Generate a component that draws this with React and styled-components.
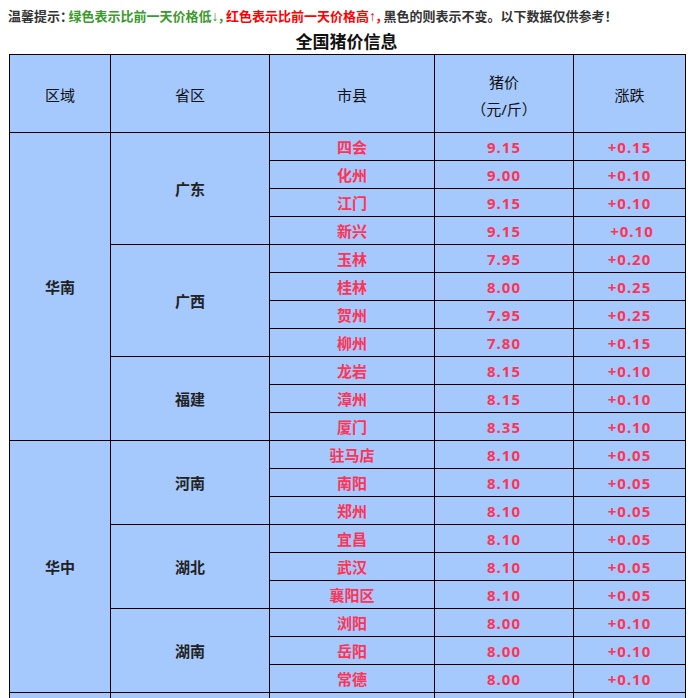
import React from 'react';
import styled, { createGlobalStyle } from 'styled-components';

const GlobalStyle = createGlobalStyle`
  html, body {
    overflow: hidden;
  }
  body {
    margin: 8px;
    background: #fff;
    font-family: "Noto Sans", "Noto Sans CJK SC", sans-serif;
    color: #222;
  }
`;

const Tip = styled.p`
  margin: 0;
  font-size: 13px;
  line-height: 17px;
  font-weight: bold;
  color: #333;
  white-space: nowrap;
`;

const TipPart = styled.span`
  color: ${props => props.color || '#333'};
`;

// half-width punctuation, like the narrow colon and commas in the notice
const Punct = styled.span`
  font-feature-settings: "halt";
  margin-right: ${props => (props.$gap ? '2px' : '0')};
`;

const Arrow = styled.span`
  display: inline-block;
  width: 6px;
  text-align: center;
  font-family: "Liberation Sans", "DejaVu Sans", sans-serif;
  font-weight: normal;
  font-size: 14px;
`;

const Title = styled.h2`
  margin: 5px 0 0;
  font-size: 17px;
  line-height: 24px;
  font-weight: bold;
  color: #111;
  text-align: center;
  width: 677px;
`;

const Table = styled.table`
  width: 677px;
  margin-left: 1px;
  border-collapse: collapse;
  table-layout: fixed;
  background: #a5c8fd;
  font-size: 15px;
`;

const HeadCell = styled.th`
  border: 1px solid #000;
  height: 78px;
  padding: 4px 0 0;
  font-weight: normal;
  line-height: 27px;
  color: #111;
  text-align: center;
  box-sizing: border-box;
`;

const Cell = styled.td`
  border: 1px solid #000;
  height: 28px;
  padding: 1px 0 0;
  text-align: center;
  box-sizing: border-box;
  line-height: 26px;
  font-weight: bold;
  color: ${props => (props.$red ? '#ff3355' : '#222')};
  letter-spacing: ${props => (props.$num ? '1px' : '0')};
`;

const data = [
  {
    region: '华南',
    provinces: [
      {
        name: '广东',
        cities: [
          ['四会', '9.15', '+0.15'],
          ['化州', '9.00', '+0.10'],
          ['江门', '9.15', '+0.10'],
          ['新兴', '9.15', '\u00a0+0.10'],
        ],
      },
      {
        name: '广西',
        cities: [
          ['玉林', '7.95', '+0.20'],
          ['桂林', '8.00', '+0.25'],
          ['贺州', '7.95', '+0.25'],
          ['柳州', '7.80', '+0.15'],
        ],
      },
      {
        name: '福建',
        cities: [
          ['龙岩', '8.15', '+0.10'],
          ['漳州', '8.15', '+0.10'],
          ['厦门', '8.35', '+0.10'],
        ],
      },
    ],
  },
  {
    region: '华中',
    provinces: [
      {
        name: '河南',
        cities: [
          ['驻马店', '8.10', '+0.05'],
          ['南阳', '8.10', '+0.05'],
          ['郑州', '8.10', '+0.05'],
        ],
      },
      {
        name: '湖北',
        cities: [
          ['宜昌', '8.10', '+0.05'],
          ['武汉', '8.10', '+0.05'],
          ['襄阳区', '8.10', '+0.05'],
        ],
      },
      {
        name: '湖南',
        cities: [
          ['浏阳', '8.00', '+0.10'],
          ['岳阳', '8.00', '+0.10'],
          ['常德', '8.00', '+0.10'],
        ],
      },
    ],
  },
  {
    region: '华东',
    provinces: [
      {
        name: '山东',
        cities: [['济南', '8.20', '+0.10']],
      },
    ],
  },
];

const renderRows = () => {
  const rows = [];
  data.forEach(area => {
    const areaSpan = area.provinces.reduce((n, p) => n + p.cities.length, 0);
    area.provinces.forEach((prov, pi) => {
      prov.cities.forEach((city, ci) => {
        rows.push(
          <tr key={`${area.region}-${prov.name}-${city[0]}`}>
            {pi === 0 && ci === 0 && <Cell rowSpan={areaSpan}>{area.region}</Cell>}
            {ci === 0 && <Cell rowSpan={prov.cities.length}>{prov.name}</Cell>}
            <Cell $red>{city[0]}</Cell>
            <Cell $red $num>{city[1]}</Cell>
            <Cell $red $num>{city[2]}</Cell>
          </tr>
        );
      });
    });
  });
  return rows;
};

const App = () => (
  <>
    <GlobalStyle />
    <Tip>
      温馨提示<Punct $gap>：</Punct>
      <TipPart color="#3a9a2c">
        绿色表示比前一天价格低<Arrow>↓</Arrow><Punct $gap>，</Punct>
      </TipPart>
      <TipPart color="#ff0000">
        红色表示比前一天价格高<Arrow>↑</Arrow><Punct $gap>，</Punct>
      </TipPart>
      <TipPart>黑色的则表示不变。以下数据仅供参考！</TipPart>
    </Tip>
    <Title>全国猪价信息</Title>
    <Table>
      <colgroup>
        <col style={{ width: 101 }} />
        <col style={{ width: 159 }} />
        <col style={{ width: 165 }} />
        <col style={{ width: 139 }} />
        <col style={{ width: 112 }} />
      </colgroup>
      <thead>
        <tr>
          <HeadCell>区域</HeadCell>
          <HeadCell>省区</HeadCell>
          <HeadCell>市县</HeadCell>
          <HeadCell>猪价<br />（元/斤）</HeadCell>
          <HeadCell>涨跌</HeadCell>
        </tr>
      </thead>
      <tbody>{renderRows()}</tbody>
    </Table>
  </>
);

export default App;
